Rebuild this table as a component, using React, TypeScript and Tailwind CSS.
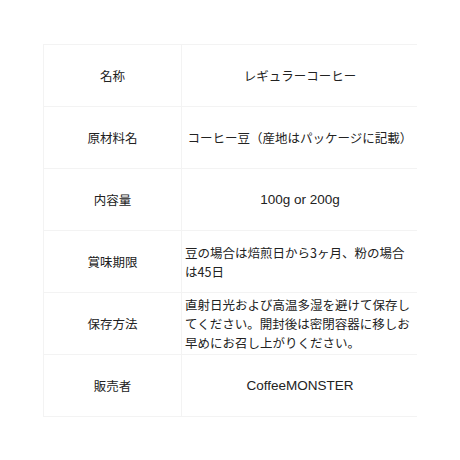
import React from 'react';

const rows: { label: string; value: string; center?: boolean; latin?: boolean }[] = [
  { label: '名称', value: 'レギュラーコーヒー', center: true },
  { label: '原材料名', value: 'コーヒー豆（産地はパッケージに記載）', center: true },
  { label: '内容量', value: '100g or 200g', center: true, latin: true },
  { label: '賞味期限', value: '豆の場合は焙煎日から3ヶ月、粉の場合は45日' },
  { label: '保存方法', value: '直射日光および高温多湿を避けて保存してください。開封後は密閉容器に移しお早めにお召し上がりください。' },
  { label: '販売者', value: 'CoffeeMONSTER', center: true, latin: true },
];

export default function App() {
  return (
    <div
      className="w-[460px] h-[460px] bg-white pt-[44px] pl-[43px] text-[#222222] text-[12.5px] leading-[19px]"
      style={{ fontFamily: '"Noto Sans CJK JP", "Noto Sans", sans-serif' }}
    >
      <div className="w-[374px] border-t border-l border-[#f3f3f3]">
        {rows.map((row) => (
          <div key={row.label} className="grid grid-cols-[138px_236px] h-[62px] border-b border-[#f3f3f3]">
            <div className="flex items-center justify-center border-r border-[#f3f3f3]">{row.label}</div>
            <div className={`flex items-center px-[3px] ${row.center ? 'justify-center' : ''}`}>
              {row.latin ? (
                <span className="font-['Liberation_Sans',sans-serif] text-[13.5px]">{row.value}</span>
              ) : (
                <span>{row.value}</span>
              )}
            </div>
          </div>
        ))}
      </div>
    </div>
  );
}
